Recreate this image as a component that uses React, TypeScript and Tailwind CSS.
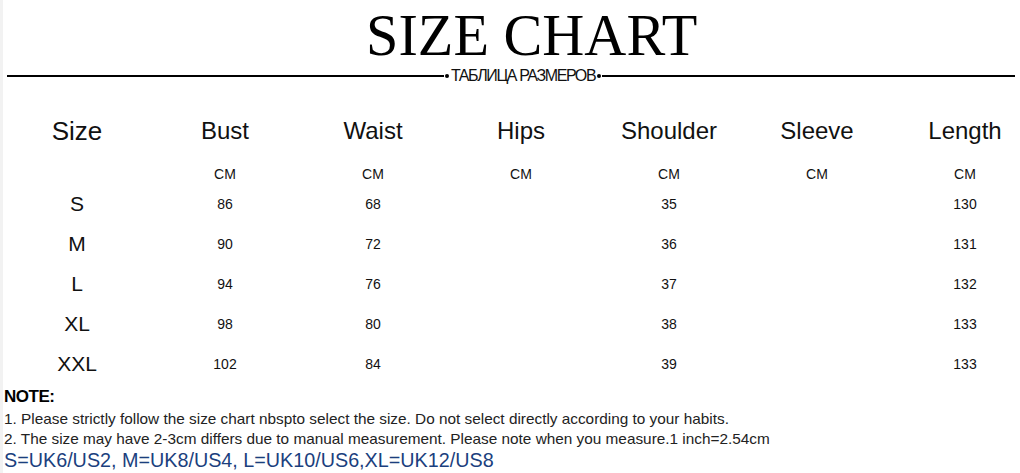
const COLUMNS = ["Size", "Bust", "Waist", "Hips", "Shoulder", "Sleeve", "Length"];

const ROWS: Array<[string, string, string, string, string, string, string]> = [
  ["S", "86", "68", "", "35", "", "130"],
  ["M", "90", "72", "", "36", "", "131"],
  ["L", "94", "76", "", "37", "", "132"],
  ["XL", "98", "80", "", "38", "", "133"],
  ["XXL", "102", "84", "", "39", "", "133"],
];

const NOTES = [
  "1. Please strictly follow the size chart nbspto select the size. Do not select directly according to your habits.",
  "2. The size may have 2-3cm differs due to manual measurement. Please note when you measure.1 inch=2.54cm",
];

function Divider() {
  return (
    <div className="flex h-[14px] items-center pl-[4px] pr-[5px]">
      <div className="h-[2px] w-[437px] bg-black" />
      <div className="flex items-center gap-[2px] px-[1px]">
        <span className="h-[4px] w-[4px] rounded-full bg-black" />
        <span className="text-[16px] leading-none tracking-[-1.4px] text-[#111]">ТАБЛИЦА РАЗМЕРОВ</span>
        <span className="h-[4px] w-[4px] rounded-full bg-black" />
      </div>
      <div className="h-[2px] flex-1 bg-black" />
    </div>
  );
}

function ChartTable() {
  return (
    <div className="flex flex-col text-[#111]">
      {/* header */}
      <div className="grid h-[40px] grid-cols-[repeat(7,148px)] items-center">
        {COLUMNS.map((c, i) => (
          <div key={c} className={i === 0 ? "pt-[2px] text-center text-[26px]" : "text-center text-[24px]"}>
            {c}
          </div>
        ))}
      </div>

      {/* units */}
      <div className="mt-[14px] grid h-[20px] grid-cols-[repeat(7,148px)] items-center">
        {COLUMNS.map((c, i) => (
          <div key={c} className="text-center text-[14px]">
            {i === 0 ? "" : "CM"}
          </div>
        ))}
      </div>

      {/* sizes */}
      {ROWS.map((row) => (
        <div key={row[0]} className="grid h-[40px] grid-cols-[repeat(7,148px)] items-center">
          {row.map((v, i) => (
            <div key={i} className={i === 0 ? "text-center text-[21px]" : "text-center text-[14px]"}>
              {v}
            </div>
          ))}
        </div>
      ))}
    </div>
  );
}

export default function App() {
  return (
    <div
      className="relative h-[473px] w-[1020px] overflow-hidden border-l-[3px] border-[#f2f2f2] bg-white"
      style={{ fontFamily: '"Liberation Sans", Arial, sans-serif' }}
    >
      {/* title */}
      <div className="mt-[5px] flex h-[60px] justify-center pl-[40px]">
        <h1
          className="scale-x-[0.97] text-[60px] leading-none text-black"
          style={{ fontFamily: '"Liberation Serif", "Times New Roman", serif' }}
        >
          SIZE CHART
        </h1>
      </div>

      <div className="mt-[4px]">
        <Divider />
      </div>

      <div className="mt-[27px]">
        <ChartTable />
      </div>

      {/* notes */}
      <div className="mt-[4px] pl-[1px]">
        <div className="text-[17px] font-bold leading-[18px] tracking-[-0.5px] text-black">NOTE:</div>
        <div className="mt-[3px] flex flex-col text-[15.35px] leading-[20px] text-[#222]">
          {NOTES.map((n) => (
            <div key={n} className="whitespace-nowrap">
              {n}
            </div>
          ))}
        </div>
        <div className="whitespace-nowrap text-[19.75px] leading-[22px] text-[#1b3f7e]">
          S=UK6/US2, M=UK8/US4, L=UK10/US6,XL=UK12/US8
        </div>
      </div>
    </div>
  );
}
